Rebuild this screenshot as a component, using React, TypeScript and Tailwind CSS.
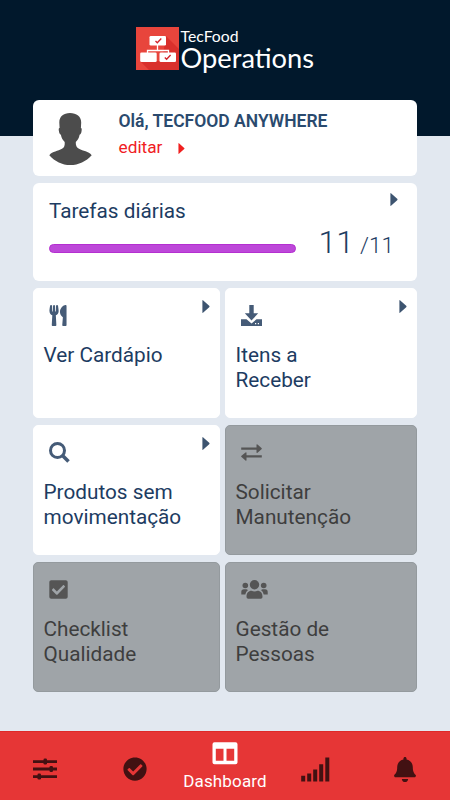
import type { ReactNode } from 'react'
import { FaBell, FaCheckCircle, FaCheckSquare, FaUtensils } from 'react-icons/fa'

const Logo = () => (
  <svg viewBox="0 0 43 43" className="h-[43px] w-[43px]">
    <rect width="43" height="43" fill="#e8453c" />
    <path d="M30 9l13 13v21H13L4 34h22z" fill="#d9302c" />
    <path d="M21.500 18v5.500M11.500 27v-3.500h21V27" fill="none" stroke="#fff" strokeWidth="1.300" />
    <rect x="13.500" y="9" width="16.500" height="9.500" rx="1.300" fill="#fff" />
    <rect x="4.200" y="25.500" width="16.500" height="9.500" rx="1.300" fill="#fff" />
    <rect x="23.500" y="25.500" width="16.500" height="9.500" rx="1.300" fill="#fff" />
    <path d="M19.500 14l1.800 1.800 4-4.300M28.800 30.500l1.800 1.800 4-4.300" fill="none" stroke="#d3232a" strokeWidth="1.300" />
  </svg>
)

const Avatar = () => (
  <svg viewBox="0 0 43 52" className="h-[52px] w-[43px]" fill="#4c4c4c">
    <path d="M21 0C14.500 0 10.300 3.500 10.300 9.500L10.600 15C9.400 15 9.700 17 10 18.500c.3 1.700.7 2.800 1.900 3.200.5 3.200 2 5.600 3.800 7.200.3 3.300-.4 5.600-2.700 6.900C9 38.200 3.500 38.300.3 42.200 6 48.500 13 52 21.300 52S37 48.500 42.700 42.200C39.500 38.300 34 38 30 35.800c-2.300-1.300-3.500-3.600-3.200-6.900 1.800-1.600 3.300-4 3.800-7.200 1.200-.4 1.600-1.500 1.900-3.200.3-1.500.5-3.500-.6-3.500l.3-5.500C32.200 3.500 27.500 0 21 0z" />
  </svg>
)

const Caret = ({ className = 'h-[13px] w-[8px] text-[#3d5470]' }: { className?: string }) => (
  <svg viewBox="0 0 8 13" className={className} fill="currentColor">
    <path d="M.4.500Q.4-.2 1 .3l6.200 5.500q.7.700 0 1.400L1 12.700q-.6.500-.6-.2z" />
  </svg>
)

const DownloadIcon = () => (
  <svg viewBox="0 0 21 21" className="h-[21px] w-[21px]" fill="currentColor">
    <path d="M8.300 0h4.400v8.300h4.500L10.500 15.500 3.800 8.300h4.500z" />
    <path fillRule="evenodd" d="M0 14.200h5.500l5 4.300 5-4.300H21V21H0zM14 18v1.200h1.200V18zm2.800 0v1.200H18V18z" />
  </svg>
)

const SearchIcon = () => (
  <svg viewBox="0 0 21 21" className="h-[21px] w-[21px]" fill="none" stroke="currentColor">
    <circle cx="8.500" cy="8.500" r="7" strokeWidth="3" />
    <path d="M13.500 13.500l6 6" strokeWidth="3.600" />
  </svg>
)

const ExchangeIcon = () => (
  <svg viewBox="0 0 21 17" className="h-[17px] w-[21px]" fill="currentColor">
    <path d="M.2 3.500H15.500V1q0-1.300 1-.5L20.500 4q.7.600 0 1.200L16.500 8.800q-1 .7-1-.5V5.700H.2zM20.800 11.300H5.500V8.900q0-1.200-1-.5L.5 11.800q-.7.600 0 1.200L4.500 16.500q1 .8 1-.5V13.500h15.300z" />
  </svg>
)

const UsersIcon = () => (
  <svg viewBox="0 0 27 19" className="h-[19px] w-[27px]" fill="currentColor">
    <circle cx="13.500" cy="4.800" r="4.700" />
    <circle cx="4.300" cy="5.500" r="2.800" />
    <circle cx="22.700" cy="5.500" r="2.800" />
    <path d="M5.500 17c0-4 2-6.200 5-6.200 2 .8 4 .8 6 0 3 0 5 2.200 5 6.200q0 1.700-1.700 1.700H7.200Q5.500 18.700 5.500 17z" />
    <path d="M.3 14.500V12Q.3 9.200 3 9.200h2.500l1.500.8Q4.700 11.500 4.300 14.500zM26.700 14.500V12q0-2.800-2.700-2.800h-2.500L20 10q2.300 1.500 2.700 4.500z" />
  </svg>
)

const SlidersIcon = () => (
  <svg viewBox="0 0 24 22" className="h-[22px] w-[24px]" fill="currentColor">
    <path d="M0 2.200h24v2.800H0zM0 9.600h24v2.800H0zM0 17.200h24V20H0z" />
    <rect x="10.500" y=".5" width="3.500" height="6" rx="1.300" />
    <rect x="16.500" y="8" width="3.500" height="6" rx="1.300" />
    <rect x="4.500" y="15.500" width="3.500" height="6" rx="1.300" />
  </svg>
)

const DashboardIcon = () => (
  <svg viewBox="0 0 26 23" className="h-[23px] w-[26px]" fill="#fff">
    <path fillRule="evenodd" d="M2.500.3h21A2 2 0 0 1 25.500 2.300v18a2 2 0 0 1-2 2h-21a2 2 0 0 1-2-2v-18a2 2 0 0 1 2-2zM3.800 6.700v12h7.700v-12zm10.700 0v12h7.700v-12z" />
  </svg>
)

const SignalIcon = () => (
  <svg viewBox="0 0 29 25" className="h-[25px] w-[29px]" fill="currentColor">
    <path d="M.2 18.800h4v5.700h-4zM6.200 16.500h4v8h-4zM12.200 12.500h4v12h-4zM18.200 7.300h4v17.200h-4zM24.300.5h4v24h-4z" />
  </svg>
)

type TileProps = {
  icon: ReactNode
  title: ReactNode
  disabled?: boolean
  arrow?: string
}

const Tile = ({ icon, title, disabled, arrow = 'mr-[9px]' }: TileProps) => (
  <div
    className={
      disabled
        ? 'h-[130px] rounded-[5px] border border-[#949a9e] bg-[#9fa4a8] text-[#3e3e3e]'
        : 'h-[130px] rounded-[5px] border border-white bg-white text-[#1d3c62]'
    }
  >
    <div className="flex h-[51px] items-start justify-between pl-[15px] pt-[11px]">
      <div className={disabled ? 'flex h-[30px] items-center text-[#555]' : 'flex h-[30px] items-center text-[#455b77]'}>
        {icon}
      </div>
      {!disabled && <Caret className={`h-[13px] w-[8px] text-[#3d5470] ${arrow}`} />}
    </div>
    <p className="pl-[9.500px] pt-[3px] text-[20.750px] leading-[25px]">{title}</p>
  </div>
)

export default function App() {
  return (
    <div
      className="flex h-[800px] w-[450px] flex-col overflow-hidden bg-[#e2e8f0]"
      style={{ fontFamily: 'Roboto, sans-serif' }}
    >
      {/* Header */}
      <header className="h-[135.500px] shrink-0 bg-[#01182c]">
        <div className="flex pl-[135.500px] pt-[27px] text-white" style={{ fontFamily: 'Lato, sans-serif' }}>
          <Logo />
          <div className="pl-[2px]">
            <p className="text-[15.750px] leading-[17px]">TecFood</p>
            <p className="text-[27.250px] leading-[27px]">Operations</p>
          </div>
        </div>
      </header>

      <main className="relative z-10 mx-[33px] -mt-[35.500px] flex flex-col gap-[7px]">
        {/* Profile */}
        <section className="flex h-[76px] rounded-[6px] bg-white pl-4 pt-[13px]">
          <Avatar />
          <div className="pl-[26.500px]">
            <p className="-mt-[2px] text-[17.500px] font-semibold leading-[20px] text-[#2a4a6e]">Olá, TECFOOD ANYWHERE</p>
            <div className="flex items-center pt-[6px] text-[17.250px] leading-[20px] text-[#f0201f]">
              <span>editar</span>
              <Caret className="ml-4 mt-[3px] h-[11px] w-[7px]" />
            </div>
          </div>
        </section>

        {/* Daily tasks */}
        <section className="h-[98px] rounded-[6px] bg-white pl-4 pr-[19px] pt-[10px] text-[#1d3c62]">
          <div className="flex justify-between">
            <p className="pt-[6px] text-[20.750px] leading-[25px]">Tarefas diárias</p>
            <Caret />
          </div>
          <div className="flex items-center pr-1">
            <div className="mt-[10px] h-[9px] w-[247px] rounded-full border border-[#b42fd0] bg-[#bd48d9]" />
            <div className="ml-auto flex items-baseline">
              <span className="text-[32px] font-light leading-[36px]">11</span>
              <span className="ml-[6px] text-[22.500px] font-light leading-[36px]">/11</span>
            </div>
          </div>
        </section>

        <section className="grid grid-cols-[186.500px_192px] gap-x-[5.500px] gap-y-[7px]">
          <Tile icon={<FaUtensils className="h-[21px] w-[18px]" />} title="Ver Cardápio" />
          <Tile icon={<DownloadIcon />} title={<>Itens a<br />Receber</>} />
          <Tile icon={<SearchIcon />} title={<>Produtos sem<br />movimentação</>} />
          <Tile disabled icon={<ExchangeIcon />} title={<>Solicitar<br />Manutenção</>} />
          <Tile disabled icon={<FaCheckSquare className="h-[21px] w-[19px]" />} title={<>Checklist<br />Qualidade</>} />
          <Tile disabled icon={<UsersIcon />} title={<>Gestão de<br />Pessoas</>} />
        </section>
      </main>

      {/* Bottom navigation */}
      <nav className="mt-auto grid h-[69.500px] grid-cols-5 items-center justify-items-center border-t border-[#de2929] bg-[#e63636] text-[#421112]">
        <div className="pt-[7px]">
          <SlidersIcon />
        </div>
        <div className="pt-[7px]">
          <FaCheckCircle className="h-6 w-6" />
        </div>
        <div className="flex flex-col items-center self-start pt-[10px] text-white">
          <DashboardIcon />
          <span className="mt-[6px] text-[17px] leading-[20px] tracking-[0.150px]">Dashboard</span>
        </div>
        <div className="pt-[7px]">
          <SignalIcon />
        </div>
        <div className="pt-[7px]">
          <FaBell className="h-[25px] w-[22px]" />
        </div>
      </nav>
    </div>
  )
}
